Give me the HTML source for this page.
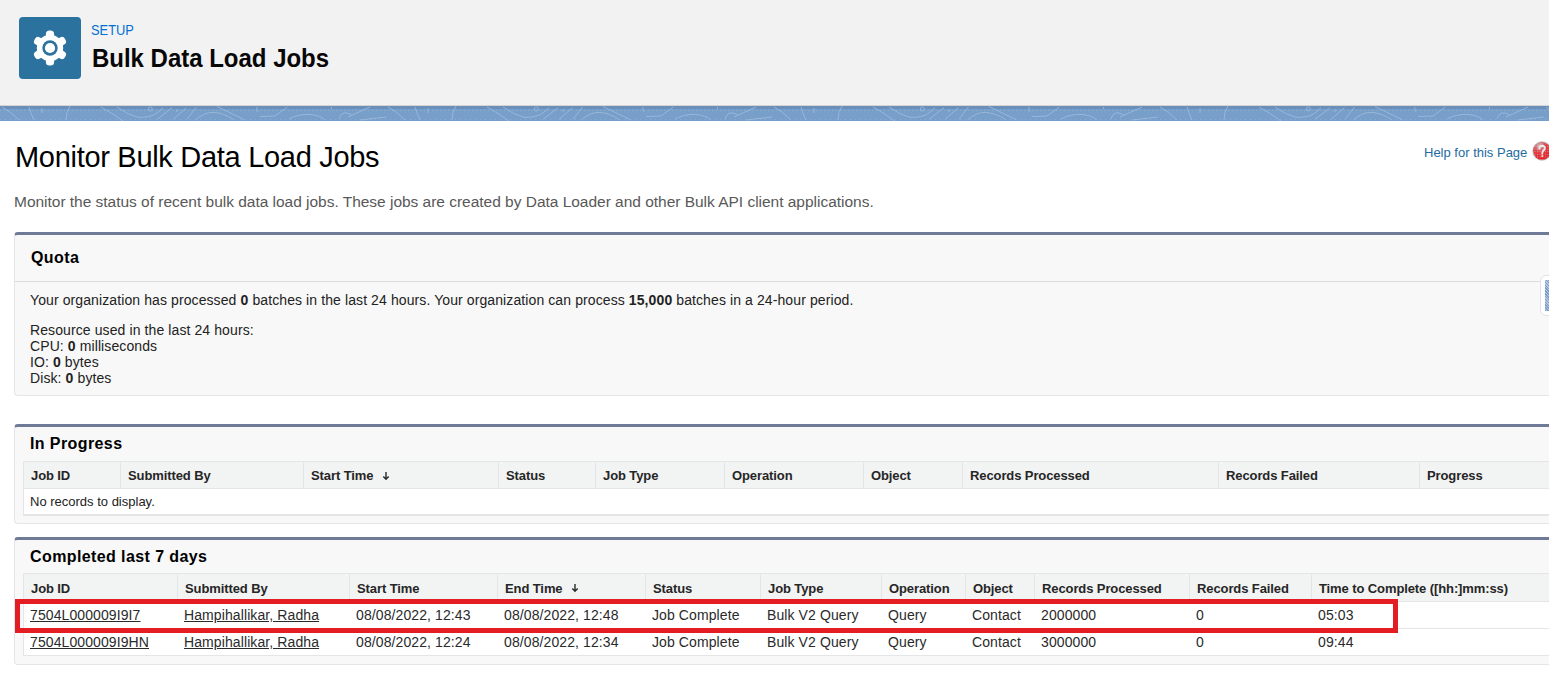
<!DOCTYPE html>
<html><head><meta charset="utf-8">
<style>
*{box-sizing:border-box}
html,body{margin:0;padding:0;background:#fff;width:1567px;height:684px;overflow:hidden;position:relative;font-family:"Liberation Sans",sans-serif;color:#000}
.abs{position:absolute;white-space:nowrap;line-height:1}
#clip{position:absolute;left:0;top:0;width:1549px;height:684px;overflow:hidden}
#hdr{position:absolute;left:0;top:0;width:1549px;height:106px;background:#f3f2f2;border-bottom:1px solid #d6d3d1}
#band{position:absolute;left:0;top:106px;width:1549px;height:15px;background:linear-gradient(#6a8fbb 0 3px,#789fca 3px);overflow:hidden}
#icon{position:absolute;left:19px;top:17px;width:62px;height:62px;border-radius:4px;background:#2b729f}
.panel{position:absolute;left:14px;width:1560px;background:#f8f8f8;border:1px solid #e3e5e7;border-top:3px solid #6f7b96;border-radius:4px}
.tbl{position:absolute;left:23px;width:1540px;background:#fff;border-top:1px solid #e3e5e7;border-left:1px solid #e3e5e7}
.hd{position:absolute;left:0;top:0;width:100%;background:#f2f3f3;border-bottom:1px solid #e3e5e7}
.vd{position:absolute;top:0;width:1px;background:#e3e5e7}
.t13b{font-size:13px;font-weight:bold;color:#262626;letter-spacing:-0.1px}
.t14{font-size:14px;color:#2a2a2a;letter-spacing:0.1px}
.u{text-decoration:underline;text-underline-offset:1px}
</style></head>
<body>
<div id="clip">
<div id="hdr"></div><div id="band"><svg width="1549" height="15" style="position:absolute;left:0;top:0" viewBox="0 0 1549 15" fill="none" stroke="#a3c0e0" stroke-width="1" opacity="0.75"><g transform="translate(0,0)"><path d="M2 1 Q10 5 19 14"/><path d="M29 1 Q31 8 34 14"/><path d="M42 2 V7"/><path d="M70 0 Q66 6 66 14"/><path d="M101 1 Q112 7 123 15"/><path d="M117 1 Q128 9 138 11.3 Q150 12 157 7 L163 1.7"/><circle cx="150.3" cy="3" r="2"/><path d="M157 13.4 L172 1.7"/><path d="M173 13.4 L186.4 1.7"/><path d="M177 3 V6"/><path d="M187 13.4 L196.4 1"/><path d="M195.6 13.8 Q204 6.5 213 6.3 Q224 7 233.7 13.8"/><path d="M217 0.5 L244.5 13.8"/><path d="M257 1 Q256 4 258 6"/><path d="M260 10.5 L275 10 L287.4 1"/><path d="M289 13 Q298 8 310 8.4 Q320 9.5 324.7 13.8"/><path d="M339 13 Q341 6 347 7 Q352 8 352 10"/><path d="M348 11 L370 1"/><path d="M331.4 1 V3"/><path d="M360 14 L386 11"/></g><g transform="translate(386,0)"><path d="M2 1 Q10 5 19 14"/><path d="M29 1 Q31 8 34 14"/><path d="M42 2 V7"/><path d="M70 0 Q66 6 66 14"/><path d="M101 1 Q112 7 123 15"/><path d="M117 1 Q128 9 138 11.3 Q150 12 157 7 L163 1.7"/><circle cx="150.3" cy="3" r="2"/><path d="M157 13.4 L172 1.7"/><path d="M173 13.4 L186.4 1.7"/><path d="M177 3 V6"/><path d="M187 13.4 L196.4 1"/><path d="M195.6 13.8 Q204 6.5 213 6.3 Q224 7 233.7 13.8"/><path d="M217 0.5 L244.5 13.8"/><path d="M257 1 Q256 4 258 6"/><path d="M260 10.5 L275 10 L287.4 1"/><path d="M289 13 Q298 8 310 8.4 Q320 9.5 324.7 13.8"/><path d="M339 13 Q341 6 347 7 Q352 8 352 10"/><path d="M348 11 L370 1"/><path d="M331.4 1 V3"/><path d="M360 14 L386 11"/></g><g transform="translate(772,0)"><path d="M2 1 Q10 5 19 14"/><path d="M29 1 Q31 8 34 14"/><path d="M42 2 V7"/><path d="M70 0 Q66 6 66 14"/><path d="M101 1 Q112 7 123 15"/><path d="M117 1 Q128 9 138 11.3 Q150 12 157 7 L163 1.7"/><circle cx="150.3" cy="3" r="2"/><path d="M157 13.4 L172 1.7"/><path d="M173 13.4 L186.4 1.7"/><path d="M177 3 V6"/><path d="M187 13.4 L196.4 1"/><path d="M195.6 13.8 Q204 6.5 213 6.3 Q224 7 233.7 13.8"/><path d="M217 0.5 L244.5 13.8"/><path d="M257 1 Q256 4 258 6"/><path d="M260 10.5 L275 10 L287.4 1"/><path d="M289 13 Q298 8 310 8.4 Q320 9.5 324.7 13.8"/><path d="M339 13 Q341 6 347 7 Q352 8 352 10"/><path d="M348 11 L370 1"/><path d="M331.4 1 V3"/><path d="M360 14 L386 11"/></g><g transform="translate(1158,0)"><path d="M2 1 Q10 5 19 14"/><path d="M29 1 Q31 8 34 14"/><path d="M42 2 V7"/><path d="M70 0 Q66 6 66 14"/><path d="M101 1 Q112 7 123 15"/><path d="M117 1 Q128 9 138 11.3 Q150 12 157 7 L163 1.7"/><circle cx="150.3" cy="3" r="2"/><path d="M157 13.4 L172 1.7"/><path d="M173 13.4 L186.4 1.7"/><path d="M177 3 V6"/><path d="M187 13.4 L196.4 1"/><path d="M195.6 13.8 Q204 6.5 213 6.3 Q224 7 233.7 13.8"/><path d="M217 0.5 L244.5 13.8"/><path d="M257 1 Q256 4 258 6"/><path d="M260 10.5 L275 10 L287.4 1"/><path d="M289 13 Q298 8 310 8.4 Q320 9.5 324.7 13.8"/><path d="M339 13 Q341 6 347 7 Q352 8 352 10"/><path d="M348 11 L370 1"/><path d="M331.4 1 V3"/><path d="M360 14 L386 11"/></g><g transform="translate(1544,0)"><path d="M2 1 Q10 5 19 14"/><path d="M29 1 Q31 8 34 14"/><path d="M42 2 V7"/><path d="M70 0 Q66 6 66 14"/><path d="M101 1 Q112 7 123 15"/><path d="M117 1 Q128 9 138 11.3 Q150 12 157 7 L163 1.7"/><circle cx="150.3" cy="3" r="2"/><path d="M157 13.4 L172 1.7"/><path d="M173 13.4 L186.4 1.7"/><path d="M177 3 V6"/><path d="M187 13.4 L196.4 1"/><path d="M195.6 13.8 Q204 6.5 213 6.3 Q224 7 233.7 13.8"/><path d="M217 0.5 L244.5 13.8"/><path d="M257 1 Q256 4 258 6"/><path d="M260 10.5 L275 10 L287.4 1"/><path d="M289 13 Q298 8 310 8.4 Q320 9.5 324.7 13.8"/><path d="M339 13 Q341 6 347 7 Q352 8 352 10"/><path d="M348 11 L370 1"/><path d="M331.4 1 V3"/><path d="M360 14 L386 11"/></g></svg><div style="position:absolute;left:0;top:4px;width:1549px;height:1px;background:repeating-linear-gradient(90deg,rgba(160,190,225,0.45) 0 1px,transparent 1px 4px)"></div><div style="position:absolute;left:0;top:13px;width:1549px;height:1px;background:repeating-linear-gradient(90deg,rgba(160,190,225,0.45) 0 1px,transparent 1px 5px)"></div></div><div id="icon"></div><svg width="62" height="62" style="position:absolute;left:19px;top:17px" viewBox="0 0 62 62">
<g transform="translate(31,31)" fill="#fff"><rect x="-4.1" y="-17.6" width="8.2" height="9" rx="3.6" transform="rotate(0)"/><rect x="-4.1" y="-17.6" width="8.2" height="9" rx="3.6" transform="rotate(60)"/><rect x="-4.1" y="-17.6" width="8.2" height="9" rx="3.6" transform="rotate(120)"/><rect x="-4.1" y="-17.6" width="8.2" height="9" rx="3.6" transform="rotate(180)"/><rect x="-4.1" y="-17.6" width="8.2" height="9" rx="3.6" transform="rotate(240)"/><rect x="-4.1" y="-17.6" width="8.2" height="9" rx="3.6" transform="rotate(300)"/><circle r="13.2"/></g>
<circle cx="31" cy="31" r="7.7" fill="#2b729f"/><circle cx="31" cy="31" r="5.1" fill="#fff"/></svg>
<div class="abs " style="left:91px;top:22px;font-size:15.5px;color:#0070d2;transform:scaleX(0.83);transform-origin:0 0">SETUP</div>
<div class="abs " style="left:92px;top:46px;font-size:25.5px;font-weight:bold;color:#080707;transform:scaleX(0.94);transform-origin:0 0">Bulk Data Load Jobs</div>
<div class="abs " style="left:15px;top:143px;font-size:29px;color:#000;letter-spacing:-0.3px">Monitor Bulk Data Load Jobs</div>
<div class="abs " style="left:1424px;top:146px;font-size:13px;color:#1e6ba0">Help for this Page</div>
<svg width="22" height="22" style="position:absolute;left:1531px;top:139.5px" viewBox="0 0 22 22">
<defs><pattern id="dots" width="2.6" height="2.6" patternUnits="userSpaceOnUse"><rect x="0.8" y="0.8" width="1.1" height="1.1" fill="#b9c4c4"/></pattern>
<radialGradient id="hg" cx="0.35" cy="0.2" r="0.7"><stop offset="0" stop-color="#c9cfcf" stop-opacity="0.9"/><stop offset="0.5" stop-color="#c9cfcf" stop-opacity="0.15"/><stop offset="1" stop-color="#c9cfcf" stop-opacity="0"/></radialGradient></defs>
<circle cx="11" cy="11" r="9.7" fill="#bdbdbd"/><circle cx="11" cy="11" r="8.7" fill="#ec1c24"/>
<circle cx="11" cy="11" r="8.7" fill="url(#dots)" opacity="0.8"/><circle cx="11" cy="11" r="8.7" fill="url(#hg)"/>
<path d="M8.3 8.6 Q8.4 5.8 11.2 5.8 Q14 6 13.8 8.4 Q13.6 9.9 12.1 10.9 Q11.3 11.5 11.3 13.5" fill="none" stroke="#e6eeee" stroke-width="1.9" stroke-linecap="round"/>
<circle cx="11.3" cy="16" r="1.1" fill="#e6eeee"/></svg>
<div class="abs " style="left:14px;top:194px;font-size:15.5px;letter-spacing:-0.02px;color:#585858">Monitor the status of recent bulk data load jobs. These jobs are created by Data Loader and other Bulk API client applications.</div>
<div class="panel" style="top:232px;height:164px"></div>
<div class="abs" style="left:15px;top:281px;width:1540px;height:1px;background:#dcdcdc"></div>
<div class="abs " style="left:31px;top:250px;font-size:16px;font-weight:bold;letter-spacing:0.4px">Quota</div>
<div class="abs " style="left:30px;top:293px;font-size:14px;color:#222;letter-spacing:0.1px">Your organization has processed <b>0</b> batches in the last 24 hours. Your organization can process <b>15,000</b> batches in a 24-hour period.</div>
<div class="abs " style="left:30px;top:323px;font-size:14px;color:#222;letter-spacing:0.1px">Resource used in the last 24 hours:</div>
<div class="abs " style="left:30px;top:339px;font-size:14px;color:#222;letter-spacing:0.1px">CPU: <b>0</b> milliseconds</div>
<div class="abs " style="left:30px;top:355px;font-size:14px;color:#222;letter-spacing:0.1px">IO: <b>0</b> bytes</div>
<div class="abs " style="left:30px;top:371px;font-size:14px;color:#222;letter-spacing:0.1px">Disk: <b>0</b> bytes</div>
<div class="abs" style="left:1540px;top:275px;width:20px;height:41px;background:#fff;border:1px solid #e2e2e2;border-radius:6px"></div>
<div class="abs" style="left:1545px;top:280px;width:6px;height:31px;background:repeating-linear-gradient(45deg,#7f9fca 0 1px,#b2c6e0 1px 2px)"></div>
<div class="panel" style="top:424px;height:100px"></div>
<div class="abs " style="left:30px;top:436px;font-size:16px;font-weight:bold;letter-spacing:0.4px">In Progress</div>
<div class="tbl" style="top:461px;height:55px;border-bottom:2px solid #e3e5e7">
<div class="hd" style="height:27px"></div>
<div class="abs t13b" style="left:7px;top:7px;">Job ID</div>
<div class="vd" style="left:96px;height:27px"></div>
<div class="abs t13b" style="left:104px;top:7px;">Submitted By</div>
<div class="vd" style="left:279px;height:27px"></div>
<div class="abs t13b" style="left:287px;top:7px;">Start Time</div>
<div class="vd" style="left:474px;height:27px"></div>
<div class="abs t13b" style="left:482px;top:7px;">Status</div>
<div class="vd" style="left:571px;height:27px"></div>
<div class="abs t13b" style="left:579px;top:7px;">Job Type</div>
<div class="vd" style="left:700px;height:27px"></div>
<div class="abs t13b" style="left:708px;top:7px;">Operation</div>
<div class="vd" style="left:839px;height:27px"></div>
<div class="abs t13b" style="left:847px;top:7px;">Object</div>
<div class="vd" style="left:938px;height:27px"></div>
<div class="abs t13b" style="left:946px;top:7px;">Records Processed</div>
<div class="vd" style="left:1194px;height:27px"></div>
<div class="abs t13b" style="left:1202px;top:7px;">Records Failed</div>
<div class="vd" style="left:1395px;height:27px"></div>
<div class="abs t13b" style="left:1403px;top:7px;">Progress</div>
<svg width="10" height="10" style="position:absolute;left:357px;top:8.5px" viewBox="0 0 10 10">
<path d="M5 1 V8.2 M2.3 5.5 L5 8.2 L7.7 5.5" fill="none" stroke="#2a2a2a" stroke-width="1.4"/></svg>
<div class="abs " style="left:6px;top:33px;font-size:13px;color:#222">No records to display.</div>
</div>
<div class="panel" style="top:537px;height:128px"></div>
<div class="abs " style="left:30px;top:549px;font-size:16px;font-weight:bold;letter-spacing:0.4px">Completed last 7 days</div>
<div class="tbl" style="top:573px;height:83px;border-bottom:1px solid #e3e5e7">
<div class="hd" style="height:28px"></div>
<div class="abs t13b" style="left:7px;top:8px;">Job ID</div>
<div class="vd" style="left:153px;height:28px"></div>
<div class="abs t13b" style="left:161px;top:8px;">Submitted By</div>
<div class="vd" style="left:325px;height:28px"></div>
<div class="abs t13b" style="left:333px;top:8px;">Start Time</div>
<div class="vd" style="left:473px;height:28px"></div>
<div class="abs t13b" style="left:481px;top:8px;">End Time</div>
<div class="vd" style="left:621px;height:28px"></div>
<div class="abs t13b" style="left:629px;top:8px;">Status</div>
<div class="vd" style="left:736px;height:28px"></div>
<div class="abs t13b" style="left:744px;top:8px;">Job Type</div>
<div class="vd" style="left:857px;height:28px"></div>
<div class="abs t13b" style="left:865px;top:8px;">Operation</div>
<div class="vd" style="left:941px;height:28px"></div>
<div class="abs t13b" style="left:949px;top:8px;">Object</div>
<div class="vd" style="left:1010px;height:28px"></div>
<div class="abs t13b" style="left:1018px;top:8px;">Records Processed</div>
<div class="vd" style="left:1165px;height:28px"></div>
<div class="abs t13b" style="left:1173px;top:8px;">Records Failed</div>
<div class="vd" style="left:1287px;height:28px"></div>
<div class="abs t13b" style="left:1295px;top:8px;">Time to Complete ([hh:]mm:ss)</div>
<svg width="10" height="10" style="position:absolute;left:546px;top:8.5px" viewBox="0 0 10 10">
<path d="M5 1 V8.2 M2.3 5.5 L5 8.2 L7.7 5.5" fill="none" stroke="#2a2a2a" stroke-width="1.4"/></svg>
<div class="abs" style="left:0;top:54px;width:1540px;height:1px;background:#e3e5e7"></div>
<div class="abs t14" style="left:6px;top:34px;"><span class="u">7504L000009I9I7</span></div>
<div class="abs t14" style="left:160px;top:34px;"><span class="u">Hampihallikar, Radha</span></div>
<div class="abs t14" style="left:332px;top:34px;">08/08/2022, 12:43</div>
<div class="abs t14" style="left:480px;top:34px;">08/08/2022, 12:48</div>
<div class="abs t14" style="left:628px;top:34px;">Job Complete</div>
<div class="abs t14" style="left:743px;top:34px;">Bulk V2 Query</div>
<div class="abs t14" style="left:864px;top:34px;">Query</div>
<div class="abs t14" style="left:948px;top:34px;">Contact</div>
<div class="abs t14" style="left:1017px;top:34px;">2000000</div>
<div class="abs t14" style="left:1172px;top:34px;">0</div>
<div class="abs t14" style="left:1294px;top:34px;">05:03</div>
<div class="abs t14" style="left:6px;top:61px;"><span class="u">7504L000009I9HN</span></div>
<div class="abs t14" style="left:160px;top:61px;"><span class="u">Hampihallikar, Radha</span></div>
<div class="abs t14" style="left:332px;top:61px;">08/08/2022, 12:24</div>
<div class="abs t14" style="left:480px;top:61px;">08/08/2022, 12:34</div>
<div class="abs t14" style="left:628px;top:61px;">Job Complete</div>
<div class="abs t14" style="left:743px;top:61px;">Bulk V2 Query</div>
<div class="abs t14" style="left:864px;top:61px;">Query</div>
<div class="abs t14" style="left:948px;top:61px;">Contact</div>
<div class="abs t14" style="left:1017px;top:61px;">3000000</div>
<div class="abs t14" style="left:1172px;top:61px;">0</div>
<div class="abs t14" style="left:1294px;top:61px;">09:44</div>
</div>
<div class="abs" style="left:15px;top:599px;width:1383px;height:34px;border:5px solid #e41c23"></div>
</div>
</body></html>
